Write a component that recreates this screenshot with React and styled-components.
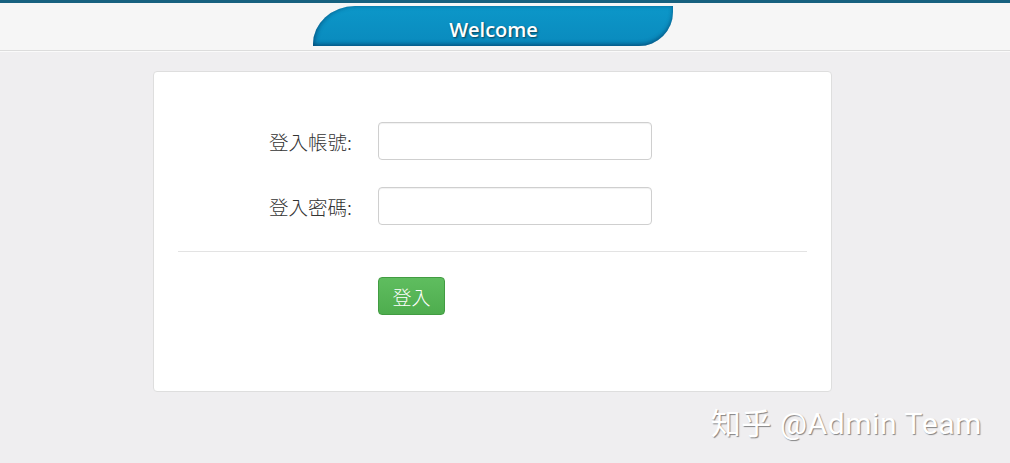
import React from "react";
import styled, { createGlobalStyle } from "styled-components";

const GlobalStyle = createGlobalStyle`
  html, body {
    margin: 0;
    padding: 0;
    background: #efeef0;
    font-family: "Open Sans", "Noto Sans CJK TC", sans-serif;
  }
  #root {
    min-height: 463px;
  }
`;

const Page = styled.div`
  position: relative;
  min-height: 463px;
  background: #efeef0;
`;

const Header = styled.header`
  height: 47px;
  background: #f6f6f6;
  border-top: 3px solid #17617f;
  border-bottom: 1px solid #dcdcdc;
  box-shadow: 0 1px 0 #fafafa;
  display: flex;
  justify-content: center;
`;

const Tab = styled.div`
  width: 360px;
  height: 40px;
  margin-top: 3px;
  margin-left: -25px;
  background: linear-gradient(#0c97c9, #0a8abd);
  border-radius: 42px 0 34px 0 / 38px 0 34px 0;
  box-shadow: inset 0 -2px 4px rgba(0, 40, 80, 0.45),
    inset 2px 0 4px rgba(0, 40, 80, 0.3);
  display: flex;
  align-items: center;
  justify-content: center;
  color: #fff;
  font-family: "Open Sans", sans-serif;
  font-weight: 600;
  font-size: 20px;
  text-shadow: 1px 1px 2px rgba(0, 0, 0, 0.55);
  padding: 6px 0 0 2px;
  box-sizing: border-box;
`;

const Card = styled.main`
  width: 679px;
  margin: 20px 0 0 153px;
  height: 321px;
  background: #fff;
  border: 1px solid #dedede;
  border-radius: 4px;
  box-sizing: border-box;
  padding: 50px 24px 0;
`;

const Row = styled.div`
  display: flex;
  align-items: center;
  height: 38px;
  margin-bottom: 27px;
`;

const Label = styled.label`
  width: 200px;
  text-align: right;
  font-size: 19.5px;
  font-weight: 300;
  color: #333;
  font-family: "Noto Sans CJK TC", sans-serif;
  padding-right: 26px;
  box-sizing: border-box;
`;

const Input = styled.input`
  width: 274px;
  height: 38px;
  box-sizing: border-box;
  border: 1px solid #cfcfcf;
  border-radius: 4px;
  box-shadow: inset 0 1px 1px rgba(0, 0, 0, 0.06);
  outline: none;
  font-size: 16px;
  padding: 6px 10px;
`;

const Divider = styled.hr`
  border: none;
  border-top: 1px solid #e3e3e3;
  margin: -1px 0 25px;
`;

const Actions = styled.div`
  padding-left: 200px;
`;

const Button = styled.button`
  width: 67px;
  height: 38px;
  background: linear-gradient(#5fbd5f, #4ead4e);
  border: 1px solid #429c42;
  border-radius: 4px;
  color: #fff;
  font-size: 19px;
  font-weight: 300;
  font-family: "Noto Sans CJK TC", sans-serif;
  cursor: pointer;
  padding: 0;
`;

const Watermark = styled.div`
  position: absolute;
  right: 28px;
  bottom: 20px;
  font-family: "Roboto", "Noto Sans CJK SC", sans-serif;
  font-size: 30px;
  color: #fff;
  text-shadow: 1px 1px 1px rgba(0, 0, 0, 0.45);
  letter-spacing: 0.6px;
`;

export default function App() {
  return (
    <>
      <GlobalStyle />
      <Page>
        <Header>
          <Tab>Welcome</Tab>
        </Header>
        <Card>
          <Row>
            <Label htmlFor="account">登入帳號:</Label>
            <Input id="account" type="text" />
          </Row>
          <Row>
            <Label htmlFor="password">登入密碼:</Label>
            <Input id="password" type="password" />
          </Row>
          <Divider />
          <Actions>
            <Button type="button">登入</Button>
          </Actions>
        </Card>
        <Watermark>知乎 @Admin Team</Watermark>
      </Page>
    </>
  );
}
